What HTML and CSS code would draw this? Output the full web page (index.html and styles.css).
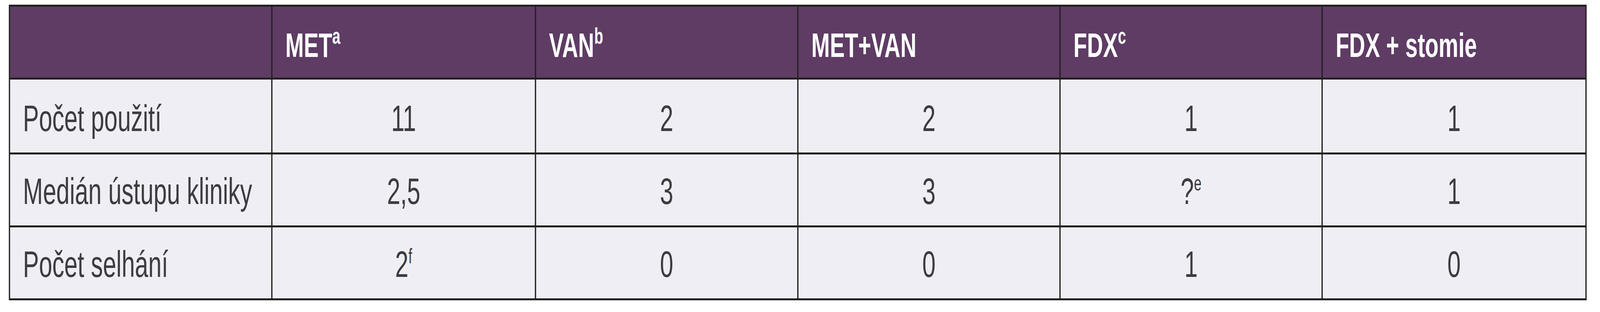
FILE: index.html
```html
<!DOCTYPE html>
<html lang="cs">
<head>
<meta charset="utf-8">
<title>Tabulka</title>
<link rel="stylesheet" href="styles.css">
</head>
<body>
<div class="frame">
<div class="sheet">
<table class="results">
  <thead>
    <tr>
      <th class="w1"></th>
      <th class="w2">MET<sup>a</sup></th>
      <th class="w3">VAN<sup>b</sup></th>
      <th class="w4">MET+VAN</th>
      <th class="w5">FDX<sup>c</sup></th>
      <th class="w6">FDX + stomie</th>
    </tr>
  </thead>
  <tbody>
    <tr class="row-first">
      <td class="label">Počet použití</td>
      <td>11</td>
      <td>2</td>
      <td>2</td>
      <td>1</td>
      <td>1</td>
    </tr>
    <tr>
      <td class="label">Medián ústupu kliniky</td>
      <td>2,5</td>
      <td>3</td>
      <td>3</td>
      <td>?<sup>e</sup></td>
      <td>1</td>
    </tr>
    <tr>
      <td class="label">Počet selhání</td>
      <td>2<sup>f</sup></td>
      <td>0</td>
      <td>0</td>
      <td>1</td>
      <td>0</td>
    </tr>
  </tbody>
</table>
</div>
</div>
<script src="fit.js"></script>
</body>
</html>
```
FILE: styles.css
```css
html,
body {
  margin: 0;
  padding: 0;
  background: #ffffff;
  overflow: hidden;
}

/* Visible frame: exactly the viewport. */
.frame {
  width: 100vw;
  height: 100vh;
  overflow: hidden;
}

/* The table is laid out at the 6342px design width and fitted
   horizontally to the real viewport width. */
.sheet {
  width: 6342px;
  height: 800px;
  transform-origin: 0 0;
  transform: scaleX(var(--fit, 1));
}

.results {
  margin: 12px 0 0 35px;
  width: 6254px;
  table-layout: fixed;
  border-collapse: separate;
  border-spacing: 5px;
  background: #231f20;
  font-family: "Liberation Sans", Arial, sans-serif;
}

.results th,
.results td {
  box-sizing: border-box;
  vertical-align: middle;
  line-height: 1.15;
  white-space: nowrap;
}

.results th {
  height: 182px;
  padding: 16px 0 0 51px;
  background: #5e3c64;
  color: #ffffff;
  font-size: 88px;
  font-weight: bold;
  text-align: left;
}

.w1 { width: 1035px; }
.w2 { width: 1040px; }
.w3 { width: 1035px; }
.w4 { width: 1034px; }
.w5 { width: 1034px; }
.w6 { width: 1041px; }

.results td {
  height: 182px;
  padding: 8px 0 0 0;
  background: #efeef4;
  color: #3d3c40;
  font-size: 95px;
  text-align: center;
}

.results .row-first td {
  height: 187px;
  padding-top: 12px;
}

.results td.label {
  padding-left: 51px;
  text-align: left;
}

.results sup {
  line-height: 0;
}

.results th sup {
  font-size: 58px;
  vertical-align: 34px;
}

.results td sup {
  font-size: 54px;
  vertical-align: 35px;
}
```
FILE: fit.js
```js
(function () {
  var fit = Math.min(1, window.innerWidth / 6342);
  document.documentElement.style.setProperty('--fit', String(fit));
})();
```
